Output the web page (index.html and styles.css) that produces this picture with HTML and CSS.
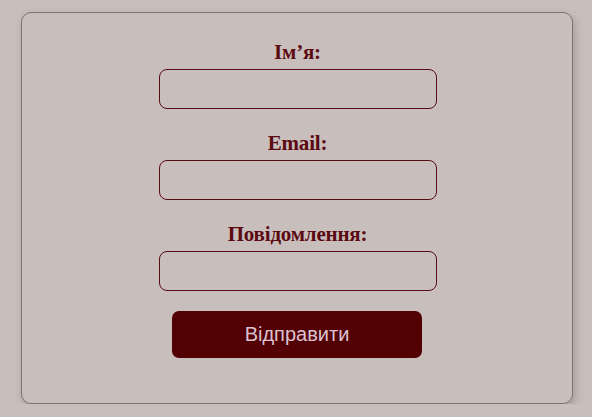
FILE: index.html
```html
<!DOCTYPE html>
<html lang="uk">
<head>
<meta charset="utf-8">
<title>Форма</title>
<link rel="stylesheet" href="styles.css">
</head>
<body>
<form class="card">
  <label class="label" for="name">Ім’я:</label>
  <input class="field" id="name" type="text">
  <label class="label" for="email">Email:</label>
  <input class="field" id="email" type="email">
  <label class="label" for="msg">Повідомлення:</label>
  <input class="field" id="msg" type="text">
  <button class="btn" type="button">Відправити</button>
</form>
</body>
</html>
```
FILE: styles.css
```css
html, body {
  margin: 0;
  padding: 0;
  background: #c8bfbc;
}
body {
  padding: 12px 19px 0 21px;
}
.card {
  box-sizing: border-box;
  width: 552px;
  height: 392px;
  border: 1px solid #7c7473;
  border-radius: 10px;
  background: #c8bfbc;
  box-shadow: 2px 4px 8px rgba(60, 40, 40, 0.25);
  display: flex;
  flex-direction: column;
  align-items: center;
  padding-top: 27px;
  padding-left: 1px;
}
.label {
  font-family: "Liberation Serif", "Times New Roman", serif;
  font-weight: bold;
  font-size: 21px;
  line-height: 24px;
  color: #5c0a12;
  margin-bottom: 5px;
  letter-spacing: -0.2px;
}
.field {
  box-sizing: border-box;
  width: 278px;
  height: 40px;
  border: 1px solid #5c0a14;
  border-radius: 8px;
  background: transparent;
  margin: 0 0 22px 0;
  padding: 0 10px;
  font-size: 16px;
  outline: none;
}
.field:last-of-type {
  margin-bottom: 20px;
}
.btn {
  box-sizing: border-box;
  width: 250px;
  height: 47px;
  margin-right: 1px;
  border: none;
  border-radius: 7px;
  background: #530005;
  color: #dcc2cf;
  font-family: "Liberation Sans", Arial, sans-serif;
  font-size: 20px;
  cursor: pointer;
}
```
